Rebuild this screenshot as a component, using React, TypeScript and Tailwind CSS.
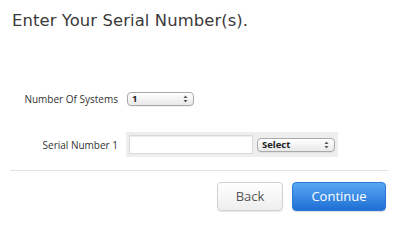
import React from "react";

function Arrows() {
  return (
    <svg width="5" height="8" viewBox="0 0 5 8" className="block">
      <path d="M2.5 0.5 L4.5 3 L0.5 3 Z" fill="#555" />
      <path d="M2.5 7.5 L4.5 5 L0.5 5 Z" fill="#555" />
    </svg>
  );
}

function MacSelect({ label, w, h }: { label: string; w: string; h: string }) {
  return (
    <div
      className={`${w} ${h} flex items-center justify-between rounded-[4px] border border-[#a9a9a9] bg-gradient-to-b from-[#ffffff] to-[#e9e9e9] pl-[4px] pr-[5px] shadow-[0_1px_0_rgba(0,0,0,0.06)]`}
    >
      <span className="text-[9.5px] font-bold leading-none text-[#222]">{label}</span>
      <Arrows />
    </div>
  );
}

export default function App() {
  return (
    <div className="w-[400px] h-[224px] overflow-hidden bg-white font-['Open_Sans',sans-serif] text-[#333]">
      <div className="pl-[12px] pt-[11px] h-[40px]">
        <h1 className="text-[16.4px] leading-[20px] text-[#3a3a3a] font-['DejaVu_Sans',sans-serif] tracking-[0.1px]">
          Enter Your Serial Number(s).
        </h1>
      </div>

      <div className="mt-[52px] flex h-[14px] items-center">
        <div className="w-[119px] pr-[1px] text-right text-[10px] leading-none text-[#333]">
          Number Of Systems
        </div>
        <div className="ml-[8px]">
          <MacSelect label="1" w="w-[67px]" h="h-[14px]" />
        </div>
      </div>

      <div className="mt-[26px] flex h-[25px] items-center">
        <div className="w-[119px] pr-[1px] text-right text-[10px] leading-none text-[#333]">
          Serial Number 1
        </div>
        <div className="ml-[7px] flex h-[25px] w-[212px] items-center gap-[4px] bg-[#eeeeee] pl-[3px]">
          <div className="h-[19px] w-[124px] border border-[#d9d9d9] bg-white shadow-[inset_0_1px_1px_rgba(0,0,0,0.08)]" />
          <MacSelect label="Select" w="w-[78px]" h="h-[14px]" />
        </div>
      </div>

      <div className="ml-[10px] mt-[13px] h-px w-[378px] bg-[#e3e3e3]" />

      <div className="mt-[11px] flex justify-end gap-[9px] pr-[14px]">
        <button className="flex h-[29px] w-[66px] items-center justify-center rounded-[4px] border border-[#d2d2d2] bg-gradient-to-b from-[#ffffff] to-[#eeeeee] text-[13px] text-[#555] shadow-[0_1px_1px_rgba(0,0,0,0.1)]">
          Back
        </button>
        <button className="flex h-[29px] w-[94px] items-center justify-center rounded-[4px] border border-[#2d78d6] bg-gradient-to-b from-[#56a7f4] to-[#1f6fd5] text-[13px] text-white shadow-[0_1px_1px_rgba(0,0,0,0.15)]">
          Continue
        </button>
      </div>
    </div>
  );
}
